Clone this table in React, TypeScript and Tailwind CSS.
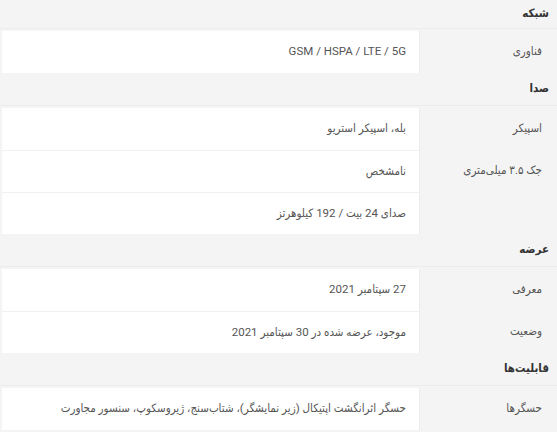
import React from "react";

type Row = { label?: string; value: string };
type Section = { title: string; rows: Row[]; first?: boolean };

const sections: Section[] = [
  { title: "شبکه", first: true, rows: [{ label: "فناوری", value: "GSM / HSPA / LTE / 5G" }] },
  {
    title: "صدا",
    rows: [
      { label: "اسپیکر", value: "بله، اسپیکر استریو" },
      { label: "جک ۳.۵ میلی‌متری", value: "نامشخص" },
      { value: "صدای 24 بیت / 192 کیلوهرتز" },
    ],
  },
  {
    title: "عرضه",
    rows: [
      { label: "معرفی", value: "27 سپتامبر 2021" },
      { label: "وضعیت", value: "موجود، عرضه شده در 30 سپتامبر 2021" },
    ],
  },
  {
    title: "قابلیت‌ها",
    rows: [{ label: "حسگرها", value: "حسگر اثرانگشت اپتیکال (زیر نمایشگر)، شتاب‌سنج، ژیروسکوپ، سنسور مجاورت" }],
  },
];

export default function App() {
  return (
    <div
      dir="rtl"
      className="w-[557px] h-[432px] overflow-hidden bg-[#f4f4f4] text-[11.5px]"
      style={{ fontFamily: "Roboto, 'DejaVu Sans Condensed', 'DejaVu Sans', sans-serif" }}
    >
      {sections.map((s, si) => (
        <div key={si}>
          <div
            className={
              (s.first ? "h-[29px]" : "h-[33px]") +
              " flex items-center pr-[8px] font-bold text-[#333] border-b border-[#ececec]"
            }
          >
            {s.title}
          </div>
          <div className="pt-[2px]">
            {s.rows.map((r, ri) => (
              <div key={ri} className="flex h-[42px]">
                <div className="w-[138px] shrink-0 flex items-center pr-[15px] text-[#555] border-l border-[#ececec]">
                  {r.label ?? ""}
                </div>
                <div
                  className={
                    "w-[417px] bg-white flex items-center pr-[13px] text-[#555] " +
                    (ri > 0 ? "border-t border-[#f1f1f1]" : "")
                  }
                >
                  {r.value}
                </div>
              </div>
            ))}
          </div>
        </div>
      ))}
    </div>
  );
}
